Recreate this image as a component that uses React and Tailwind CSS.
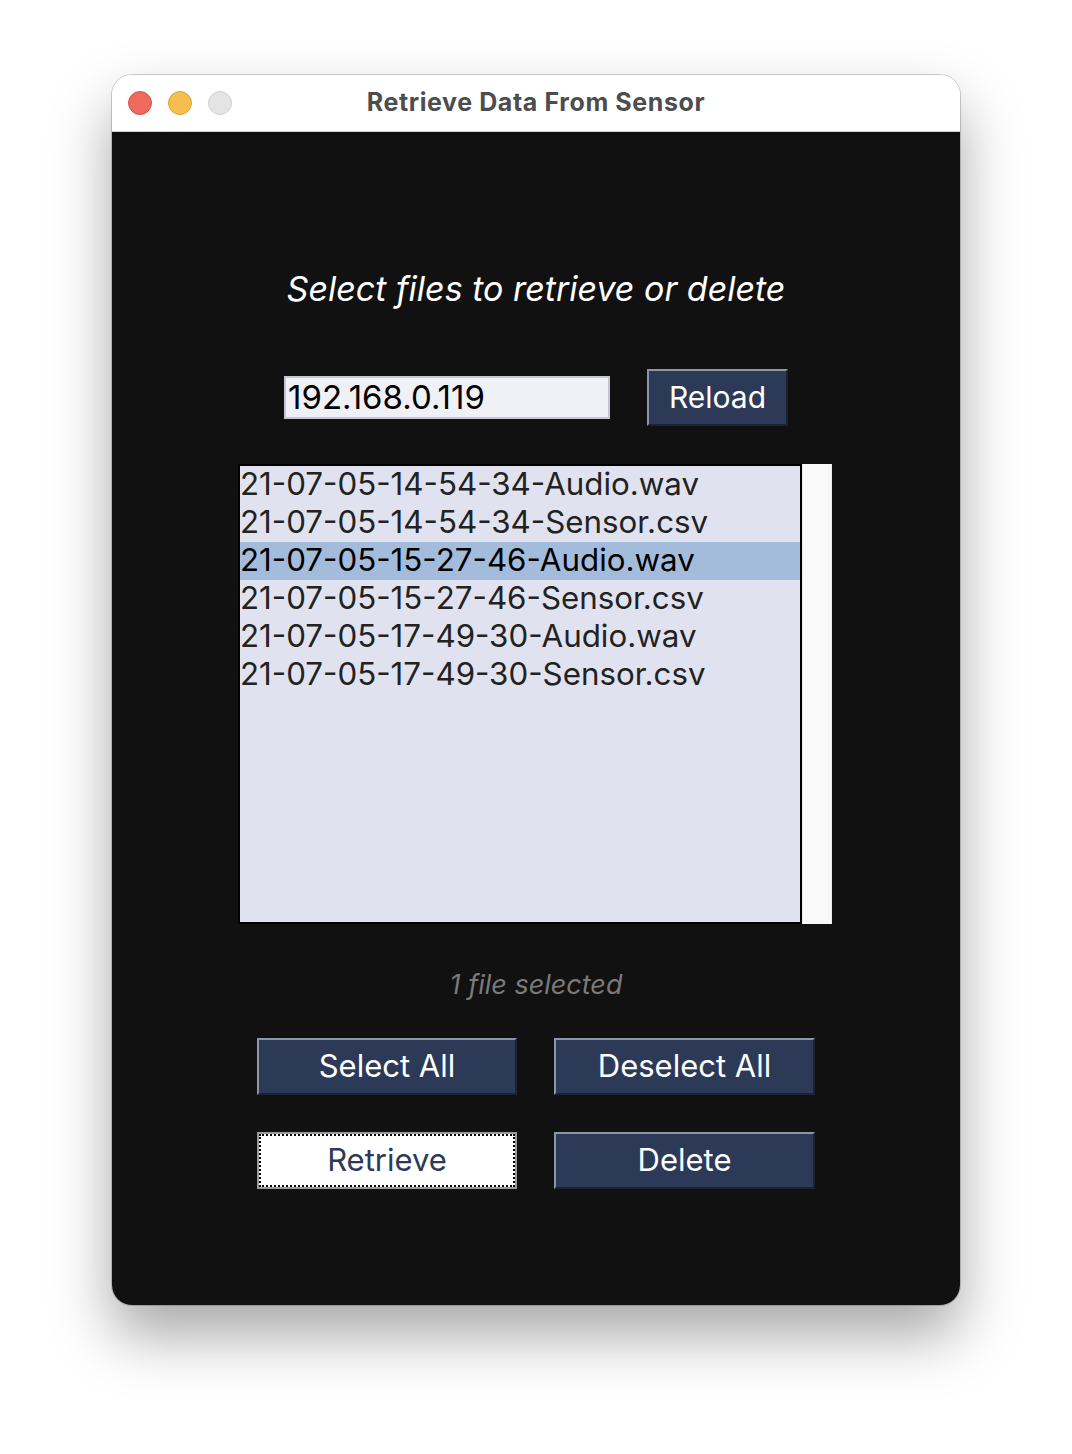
import { useState } from 'react';

const files = [
  '21-07-05-14-54-34-Audio.wav',
  '21-07-05-14-54-34-Sensor.csv',
  '21-07-05-15-27-46-Audio.wav',
  '21-07-05-15-27-46-Sensor.csv',
  '21-07-05-17-49-30-Audio.wav',
  '21-07-05-17-49-30-Sensor.csv',
];

const btn =
  'h-[57px] flex items-center justify-center text-[30px] border-2 border-t-[#8d96a8] border-l-[#8d96a8] border-r-[#1b2335] border-b-[#1b2335]';

export default function App() {
  const [ip, setIp] = useState('192.168.0.119');
  const [selected, setSelected] = useState([2]);

  const toggle = (i) =>
    setSelected((s) => (s.includes(i) ? s.filter((x) => x !== i) : [...s, i]));

  return (
    <div className="min-h-[1454px] bg-white pt-[75px] pl-[112px] font-['Inter',sans-serif]">
      <div className="w-[848px] h-[1230px] rounded-[20px] overflow-hidden flex flex-col shadow-[0_30px_60px_rgba(0,0,0,0.35),0_0_0_1px_rgba(0,0,0,0.18)]">
        {/* title bar */}
        <div className="h-[57px] bg-white flex items-center relative border-b border-[#d0d0d0]">
          <div className="flex gap-4 pl-[16px]">
            <span className="w-6 h-6 rounded-full bg-[#ee6a5f] border border-[#d65246]" />
            <span className="w-6 h-6 rounded-full bg-[#f5be4f] border border-[#d9a23a]" />
            <span className="w-6 h-6 rounded-full bg-[#e4e4e4] border border-[#cfcfcf]" />
          </div>
          <div className="absolute inset-0 flex items-center justify-center text-[25px] tracking-[0.6px] font-bold text-[#4d4d4d] pointer-events-none">
            Retrieve Data From Sensor
          </div>
        </div>

        {/* body */}
        <div className="flex-1 bg-[#111111] flex flex-col items-center pt-[136px]">
          <h1 className="text-[34px] leading-[42px] italic text-white">
            Select files to retrieve or delete
          </h1>

          <div className="flex items-center gap-[37px] mt-[59px]">
            <input
              value={ip}
              onChange={(e) => setIp(e.target.value)}
              className="w-[326px] h-[43px] bg-[#eff1f6] border-2 border-[#c4c7cf] px-[2px] text-[33px] text-black outline-none"
            />
            <button className={`${btn} w-[141px] bg-[#2c3a58] text-white`}>Reload</button>
          </div>

          <div className="flex w-[594px] mt-[38px] -ml-[2px]">
            <div className="flex-none w-[564px] h-[460px] bg-[#e0e3ef] border-2 border-black">
              {files.map((f, i) => (
                <div
                  key={f}
                  onClick={() => toggle(i)}
                  className={`h-[38px] flex items-center text-[31.3px] leading-none cursor-default ${
                    selected.includes(i) ? 'bg-[#a4bcdb] text-black' : 'text-[#222]'
                  }`}
                >
                  {f}
                </div>
              ))}
            </div>
            <div className="flex-none w-[30px] h-[460px] bg-[#f9f9f9] border-x border-[#ececec]" />
          </div>

          <p className="mt-[44px] text-[27px] leading-[33px] italic text-[#7a7a7a]">
            {selected.length} file{selected.length === 1 ? '' : 's'} selected
          </p>

          <div className="grid grid-cols-[260px_261px] gap-x-[37px] gap-y-[37px] mt-[37px]">
            <button className={`${btn} bg-[#2c3a58] text-white !text-[31px]`} onClick={() => setSelected(files.map((_, i) => i))}>
              Select All
            </button>
            <button className={`${btn} bg-[#2c3a58] text-white !text-[31px]`} onClick={() => setSelected([])}>
              Deselect All
            </button>
            <button className="h-[57px] flex items-center justify-center text-[31px] bg-white text-[#2c3a58] border-2 border-[#9a9a9a] outline-2 outline-dotted outline-black -outline-offset-[4px]">
              Retrieve
            </button>
            <button className={`${btn} bg-[#2c3a58] text-white !text-[31px]`}>Delete</button>
          </div>
        </div>
      </div>
    </div>
  );
}
